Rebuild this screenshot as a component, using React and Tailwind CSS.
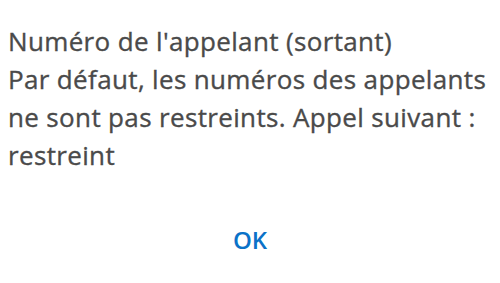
export default function App() {
    return (
        <div
            className="w-[500px] h-[283px] bg-white flex flex-col overflow-hidden"
            style={{ fontFamily: '"Open Sans", "Noto Sans", sans-serif' }}
        >
            <div className="pl-[8px] pt-[22px] text-[26px] leading-[38px] font-medium text-[#4a4a4a] tracking-[0.35px] whitespace-nowrap [-webkit-text-stroke:0.35px_#4a4a4a]">
                <p>Numéro de l'appelant (sortant)</p>
                <p>Par défaut, les numéros des appelants</p>
                <p>ne sont pas restreints. Appel suivant :</p>
                <p>restreint</p>
            </div>
            <div className="flex justify-center pt-[51px]">
                <button className="text-[24px] leading-[30px] font-semibold text-[#0b72c8]">OK</button>
            </div>
        </div>
    );
}
